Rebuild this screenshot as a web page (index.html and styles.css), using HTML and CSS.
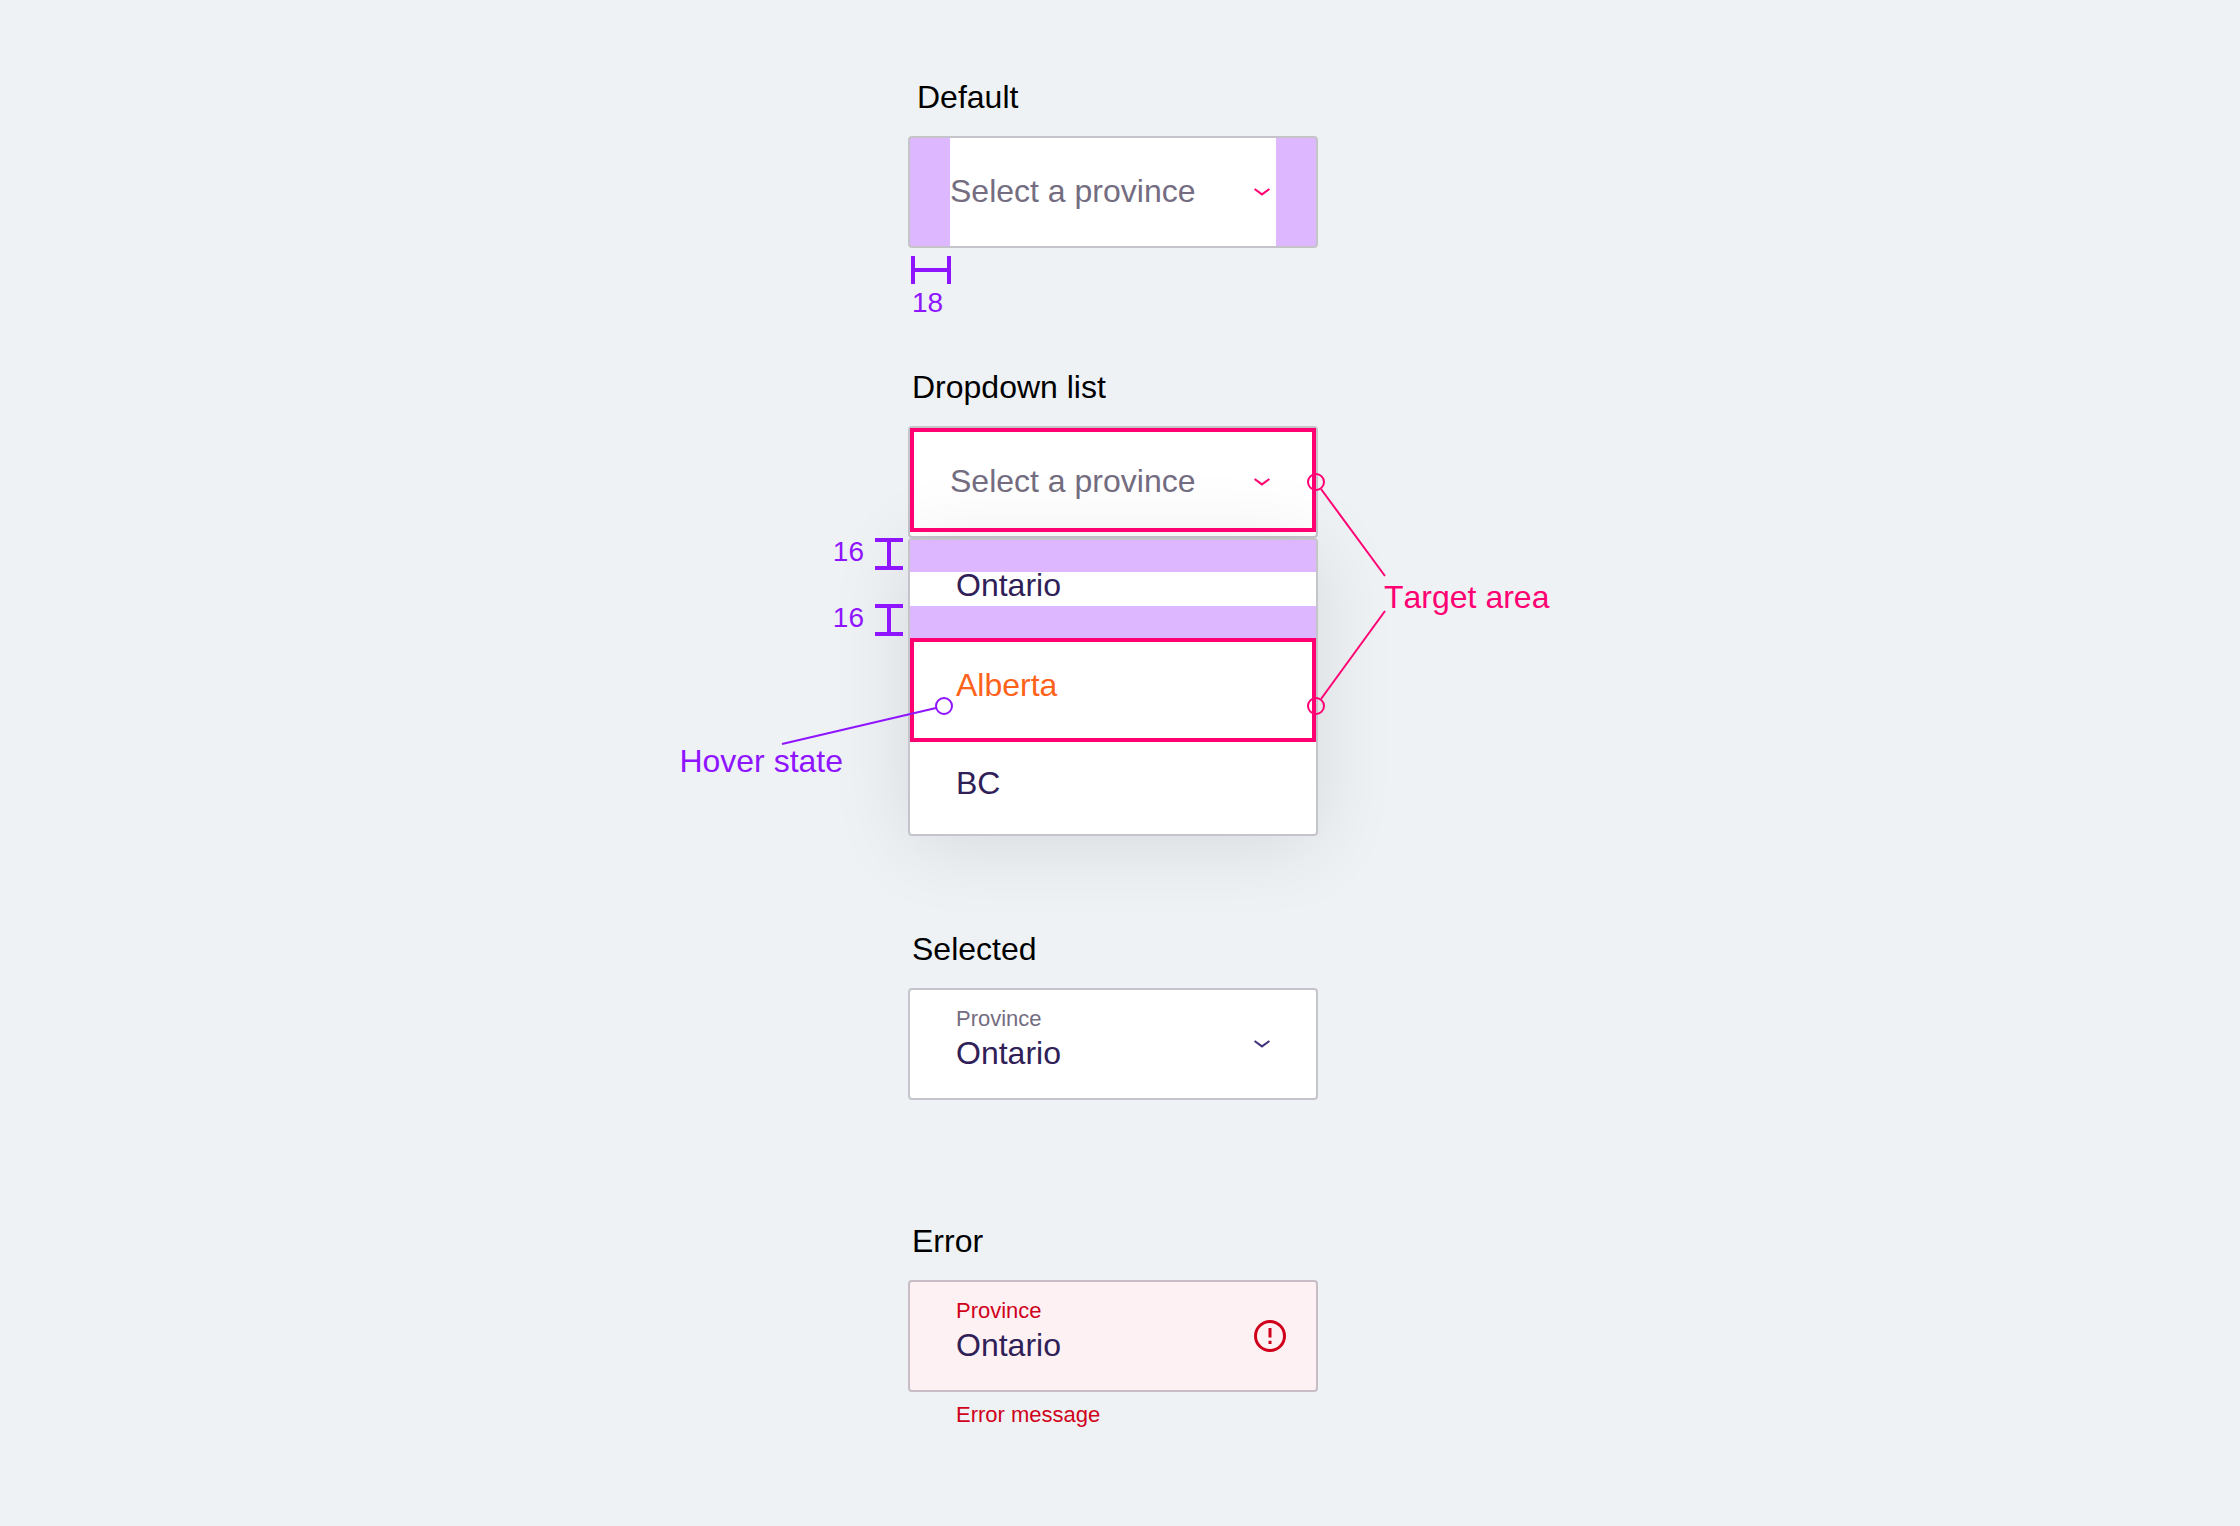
FILE: index.html
```html
<!DOCTYPE html>
<html lang="en">
<head>
  <meta charset="utf-8">
  <meta name="viewport" content="width=device-width, initial-scale=1">
  <title>Dropdown states</title>
  <link rel="stylesheet" href="styles.css">
</head>
<body>
  <main class="board">

    <section class="spec spec--default">
      <h2 class="title title--inset"><label for="province-default">Default</label></h2>
      <div class="field field--padded">
        <select class="field-select field-select--empty" id="province-default">
          <option>Select a province</option>
          <option>Ontario</option>
          <option>Alberta</option>
          <option>BC</option>
        </select>
        <svg class="chevron chevron--pink" viewBox="0 0 16 8" aria-hidden="true"><path d="M.6 1 8 6.400 15.400 1"/></svg>
      </div>
      <div class="measure">
        <span class="gauge gauge--horizontal"></span>
        <span class="measure-value">18</span>
      </div>
    </section>

    <section class="spec spec--list">
      <h2 class="title" id="list-title">Dropdown list</h2>
      <div class="dropdown">
        <button class="field field--trigger" type="button" aria-haspopup="listbox" aria-expanded="true">
          <span>Select a province</span>
          <svg class="chevron chevron--pink" viewBox="0 0 16 8" aria-hidden="true"><path d="M.6 1 8 6.400 15.400 1"/></svg>
          <span class="target"></span>
        </button>
        <ul class="menu" role="listbox" aria-labelledby="list-title">
          <li class="option option--banded" role="option">Ontario</li>
          <li class="option option--hover" role="option">Alberta<span class="target"></span></li>
          <li class="option" role="option">BC</li>
        </ul>

        <svg class="callouts" aria-hidden="true">
          <g class="callout callout--pink">
            <circle cx="408" cy="56" r="8"/>
            <path d="M413 63 477 150"/>
            <circle cx="408" cy="280" r="8"/>
            <path d="M413 273 477 185"/>
          </g>
          <g class="callout callout--purple">
            <circle cx="36" cy="280" r="8"/>
            <path d="M28 282-126 318"/>
          </g>
        </svg>
        <div class="side-measure side-measure--top">
          <span class="measure-value">16</span>
          <span class="gauge gauge--vertical"></span>
        </div>
        <div class="side-measure side-measure--bottom">
          <span class="measure-value">16</span>
          <span class="gauge gauge--vertical"></span>
        </div>
        <span class="note note--hover">Hover state</span>
        <span class="note note--target">Target area</span>
      </div>
    </section>

    <section class="spec spec--selected">
      <h2 class="title">Selected</h2>
      <div class="field field--filled">
        <div class="field-body">
          <label class="field-label" for="province-selected">Province</label>
          <select class="field-select" id="province-selected">
            <option>Ontario</option>
            <option>Alberta</option>
            <option>BC</option>
          </select>
        </div>
        <svg class="chevron chevron--dark" viewBox="0 0 16 8" aria-hidden="true"><path d="M.6 1 8 6.400 15.400 1"/></svg>
      </div>
    </section>

    <section class="spec">
      <h2 class="title">Error</h2>
      <div class="field field--filled field--error">
        <div class="field-body">
          <label class="field-label" for="province-error">Province</label>
          <select class="field-select" id="province-error" aria-invalid="true" aria-describedby="province-message">
            <option>Ontario</option>
            <option>Alberta</option>
            <option>BC</option>
          </select>
        </div>
        <svg class="alert" viewBox="0 0 32 32" aria-hidden="true">
          <circle cx="16" cy="16" r="14.500"/>
          <path d="M16 8v9.500M16 20.800v3.200"/>
        </svg>
      </div>
      <p class="message" id="province-message">Error message</p>
    </section>

  </main>
</body>
</html>
```
FILE: styles.css
```css
:root {
  --page: #eef2f5;
  --line: #c5c4ca;
  --purple: #8f14ff;
  --lilac: #ddb7ff;
  --pink: #ff0073;
  --ink: #2f2057;
  --muted: #746d81;
  --red: #d0021b;
}

* {
  box-sizing: border-box;
}

body {
  margin: 0;
  background: var(--page);
  color: #000;
  font: 32px/36px "Liberation Sans", Arial, Helvetica, sans-serif;
  font-kerning: none;
}

.board {
  display: flex;
  flex-direction: column;
  align-items: center;
  padding: 79px 14px 79px 0;
}

.spec {
  width: 410px;
}

.spec--default {
  margin-bottom: 52px;
}

.spec--list {
  margin-bottom: 95px;
}

.spec--selected {
  margin-bottom: 123px;
}

.title {
  margin: 0 0 21px;
  padding-left: 4px;
  font-size: 32px;
  font-weight: 400;
}

.title--inset {
  padding-left: 9px;
}

/* Fields */

.field {
  display: flex;
  align-items: center;
  width: 100%;
  height: 112px;
  border: 2px solid var(--line);
  border-radius: 4px;
  background: #fff;
}

.field--padded {
  padding: 0 46px 0 40px;
  background: linear-gradient(90deg, var(--lilac) 40px, #fff 40px calc(100% - 40px), var(--lilac) calc(100% - 40px));
}

.field--trigger {
  position: relative;
  justify-content: space-between;
  padding: 0 46px 0 40px;
  color: var(--muted);
  font: inherit;
  text-align: left;
}

.field--filled {
  padding: 0 46px;
}

.field--error {
  padding-right: 30px;
  border-color: #c8bcc5;
  background: #fef1f4;
}

.field-body {
  display: flex;
  flex: 1;
  flex-direction: column;
  gap: 4px;
  align-self: flex-start;
  padding-top: 17px;
}

.field-label {
  color: var(--muted);
  font-size: 22px;
  line-height: 24px;
}

.field--error .field-label {
  color: var(--red);
}

.field-select {
  flex: 1;
  min-width: 0;
  margin: 0;
  padding: 0;
  border: 0;
  outline-color: var(--pink);
  background: none;
  color: var(--ink);
  font: inherit;
  font-kerning: none;
  appearance: none;
}

.field-select--empty {
  padding-bottom: 2px;
  color: var(--muted);
}

.field--trigger > span:first-child {
  padding-bottom: 2px;
}

.chevron {
  flex: none;
  width: 16px;
  height: 8px;
  fill: none;
  stroke-width: 2;
}

.chevron--pink {
  stroke: var(--pink);
}

.chevron--dark {
  stroke: #43327a;
}

.alert {
  flex: none;
  width: 32px;
  height: 32px;
  fill: none;
  stroke: var(--red);
  stroke-width: 3;
}

.message {
  margin: 0;
  padding: 11px 48px 0;
  color: var(--red);
  font-size: 22px;
  line-height: 24px;
}

/* Open list */

.dropdown {
  position: relative;
}

.menu {
  position: relative;
  margin: 0;
  padding: 0;
  border: 2px solid var(--line);
  border-radius: 4px;
  background: #fff;
  box-shadow: 0 8px 80px rgba(0, 0, 0, 0.1);
  list-style: none;
}

.option {
  position: relative;
  height: 98px;
  padding: 29px 46px;
  color: var(--ink);
}

.option--banded {
  padding-top: 27px;
  background: linear-gradient(var(--lilac) 32px, #fff 32px 66px, var(--lilac) 66px);
}

.option--hover {
  color: #ff6219;
}

.target {
  position: absolute;
  z-index: 1;
  top: 0;
  left: 0;
  width: 100%;
  height: 104px;
  border: 4px solid var(--pink);
}

/* Measurements and callouts */

.measure {
  display: flex;
  flex-direction: column;
  align-items: flex-start;
  gap: 5px;
  padding: 8px 0 0 3px;
  color: var(--purple);
}

.measure-value {
  padding-left: 1px;
  font-size: 28px;
  line-height: 28px;
}

.gauge {
  display: block;
}

.gauge--horizontal {
  width: 40px;
  height: 28px;
  border: solid var(--purple);
  border-width: 0 4px;
  background: linear-gradient(var(--purple), var(--purple)) center / 100% 4px no-repeat;
}

.gauge--vertical {
  width: 28px;
  height: 32px;
  border: solid var(--purple);
  border-width: 4px 0;
  background: linear-gradient(var(--purple), var(--purple)) center / 4px 100% no-repeat;
}

.side-measure {
  position: absolute;
  right: calc(100% + 5px);
  display: flex;
  gap: 11px;
  color: var(--purple);
}

.side-measure--top {
  top: 112px;
}

.side-measure--bottom {
  top: 178px;
}

.callouts {
  position: absolute;
  z-index: 2;
  inset: 0;
  width: 100%;
  height: 100%;
  overflow: visible;
  pointer-events: none;
}

.callout {
  fill: none;
  stroke-width: 2;
}

.callout--pink {
  stroke: var(--pink);
}

.callout--purple {
  stroke: var(--purple);
}

.note {
  position: absolute;
  white-space: nowrap;
}

.note--hover {
  top: 317px;
  right: calc(100% + 65px);
  color: var(--purple);
}

.note--target {
  top: 153px;
  left: calc(100% + 66px);
  color: var(--pink);
}
```
